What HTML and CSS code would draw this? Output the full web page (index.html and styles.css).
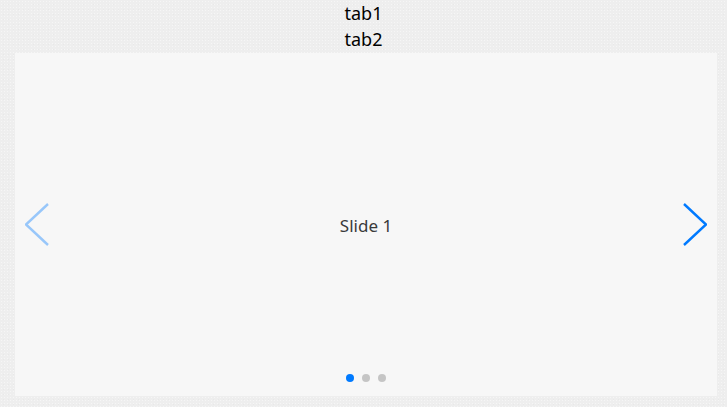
FILE: index.html
```html
<!DOCTYPE html>
<html lang="en">
<head>
  <meta charset="UTF-8">
  <title>Tabs Swiper</title>
  <link rel="stylesheet" href="styles.css">
</head>
<body>
<div class="tabs">
  <div class="tab">tab1</div>
  <div class="tab">tab2</div>
</div>

<div class="swiper">
  <div class="slide">Slide 1</div>

  <button class="nav nav-prev disabled" type="button" aria-label="Previous slide">
    <svg width="24" height="43" viewBox="0 0 24 43"><polyline points="23,1 1,21.5 23,42"/></svg>
  </button>
  <button class="nav nav-next" type="button" aria-label="Next slide">
    <svg width="24" height="43" viewBox="0 0 24 43"><polyline points="1,1 23,21.5 1,42"/></svg>
  </button>

  <div class="pagination">
    <span class="bullet active"></span>
    <span class="bullet"></span>
    <span class="bullet"></span>
  </div>
</div>
</body>
</html>
```

FILE: styles.css
```css
* {
  box-sizing: border-box;
}

body {
  margin: 0;
  padding: 0;
  background-color: #eeeeee;
  background-image:
    radial-gradient(rgba(255, 255, 255, 0.45) 0.6px, transparent 0.8px),
    radial-gradient(rgba(0, 0, 0, 0.025) 0.6px, transparent 0.8px);
  background-size: 3px 3px, 5px 5px;
  background-position: 0 0, 1px 2px;
  font-family: "Noto Sans", "Open Sans", sans-serif;
}

.tabs {
  text-align: center;
}

.tab {
  font-size: 18px;
  line-height: 26px;
  color: #000;
}

.swiper {
  position: relative;
  height: 343px;
  margin: 1px 10px 0 15px;
  background: #f7f7f7;
}

.slide {
  height: 100%;
  display: flex;
  align-items: center;
  justify-content: center;
  padding-top: 2px;
  font-size: 17px;
  color: #3a3a3a;
}

.nav {
  position: absolute;
  top: 50%;
  margin-top: -22px;
  width: 24px;
  height: 43px;
  padding: 0;
  border: none;
  background: none;
  cursor: pointer;
}

.nav svg {
  display: block;
  fill: none;
  stroke: #007aff;
  stroke-width: 2.4;
}

.nav.disabled {
  opacity: 0.38;
  cursor: auto;
}

.nav-prev {
  left: 10px;
}

.nav-next {
  right: 10px;
}

.pagination {
  position: absolute;
  left: 0;
  right: 0;
  bottom: 14px;
  display: flex;
  justify-content: center;
  gap: 8px;
}

.bullet {
  width: 8px;
  height: 8px;
  border-radius: 50%;
  background: #000;
  opacity: 0.2;
}

.bullet.active {
  background: #007aff;
  opacity: 1;
}
```
